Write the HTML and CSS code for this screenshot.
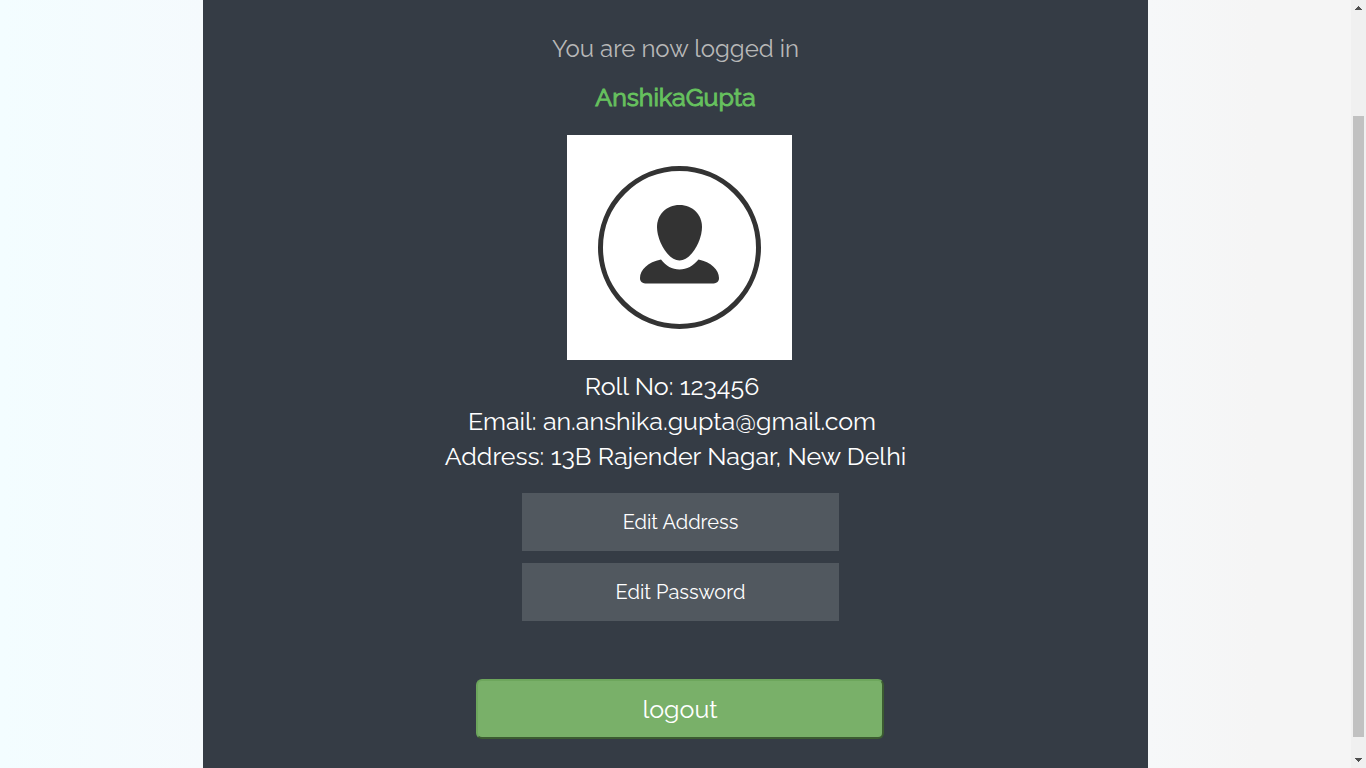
FILE: index.html
```html
<!DOCTYPE html>
<html lang="en">
<head>
<meta charset="utf-8">
<meta name="viewport" content="width=device-width, initial-scale=1">
<title>Profile</title>
<link rel="stylesheet" href="styles.css">
</head>
<body>
<div class="page">
  <main class="panel">
    <h1 class="greeting">You are now logged in</h1>
    <h2 class="username">AnshikaGupta</h2>
    <svg class="avatar" viewBox="0 0 225 225" role="img" aria-label="Profile picture">
      <rect width="225" height="225" fill="#fff"/>
      <circle cx="112.5" cy="112.5" r="79" fill="none" stroke="#333" stroke-width="5"/>
      <path fill="#333" d="M112.500 70C126 70 135 80 135 92C135 106 124 125.500 112.500 125.500C101 125.500 90 106 90 92C90 80 99 70 112.500 70Z"/>
      <path fill="#333" d="M94 124.500C99 131 105 134.500 112.500 134.500C120 134.500 126 131 131.500 124.500C144 127 152 135 152 143C152 147 149.500 148.500 145 148.500H80C75.500 148.500 73 147 73 143C73 135 81 127 94 124.500Z"/>
    </svg>
    <div class="details">
      <p class="short">Roll No: 123456</p>
      <p class="short">Email: an.anshika.gupta@gmail.com</p>
      <p>Address: 13B Rajender Nagar, New Delhi</p>
    </div>
    <div class="actions">
      <button class="edit" type="button">Edit Address</button>
      <button class="edit" type="button">Edit Password</button>
    </div>
    <button class="logout" type="button">logout</button>
  </main>
</div>
<div class="scrollbar" aria-hidden="true">
  <svg class="arrow" viewBox="0 0 7 4"><path d="M3 0h1v1h1v1h1v1h1v1H0V3h1V2h1V1h1z"/></svg>
  <div class="track"><div class="thumb"></div></div>
  <svg class="arrow" viewBox="0 0 7 4"><path d="M0 0h7v1H6v1H5v1H4v1H3V3H2V2H1V1H0z"/></svg>
</div>
</body>
</html>
```
FILE: styles.css
```css
* { box-sizing: border-box; }

body {
  margin: 0;
  display: flex;
  min-height: 100vh;
  font-family: Raleway, Lato, "Open Sans", sans-serif;
  color: #fff;
}

.page {
  flex: 1;
  display: flex;
  justify-content: center;
  background: linear-gradient(to right, #f3fdff, #f5fafd 15%, #f6f8f9 85%, #f5f5f5 93%);
}

.panel {
  width: 70%;
  display: flex;
  flex-direction: column;
  align-items: center;
  padding-top: 33px;
  background: #353c45;
}

.greeting,
.username {
  margin: 0;
  font-weight: 400;
  line-height: 32px;
}

.greeting {
  font-size: 24px;
  color: #b8b8b8;
}

.username {
  margin-top: 16px;
  font-size: 25px;
  color: #66c15e;
  -webkit-text-stroke: 1px #66c15e;
}

.avatar {
  width: 225px;
  height: 225px;
  margin: 22px 0 9px 8px;
}

.details {
  font-size: 25px;
  line-height: 35px;
  text-align: center;
}

.details p { margin: 0; }
.details .short { padding-right: 7px; }

.actions {
  display: flex;
  flex-direction: column;
  gap: 12px;
  width: 317px;
  margin: 19px 0 58px 10px;
}

button {
  font-family: inherit;
  color: #fff;
  cursor: pointer;
}

.edit {
  height: 58px;
  padding: 0;
  border: 0;
  background: #51585f;
  font-size: 20px;
}

.logout {
  width: 408px;
  height: 60px;
  margin-left: 9px;
  border: 2px solid;
  border-color: #6da65c #3c5c31 #3c5c31 #6da65c;
  border-radius: 6px;
  background: #79b069;
  font-size: 25px;
}

.scrollbar {
  display: flex;
  flex-direction: column;
  align-items: center;
  width: 15px;
  padding: 6px 0;
  background: #f0f0f0;
}

.arrow {
  width: 7px;
  height: 4px;
  fill: #505050;
  shape-rendering: crispEdges;
}

.track {
  flex: 1;
  display: flex;
  flex-direction: column;
  padding: 106px 0 21px;
}

.thumb {
  flex: 1;
  width: 11px;
  background: #c1c1c1;
}
```
